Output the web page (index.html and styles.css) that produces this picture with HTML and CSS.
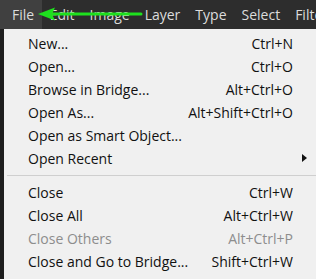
FILE: index.html
```html
<!DOCTYPE html>
<html lang="en">
<head>
    <meta charset="UTF-8">
    <title>File menu</title>
    <link rel="stylesheet" href="styles.css">
</head>
<body>
    <nav class="menubar">
        <span class="top-item active">File</span>
        <span class="top-item">Edit</span>
        <span class="top-item">Image</span>
        <span class="top-item">Layer</span>
        <span class="top-item">Type</span>
        <span class="top-item">Select</span>
        <span class="top-item">Filter</span>
        <!-- green pointer arrow drawn over the bar -->
        <svg class="pointer" width="110" height="14" viewBox="0 0 110 14">
            <path d="M14 7 H104" stroke="#1ee01e" stroke-width="3" stroke-linecap="round"/>
            <path d="M1 7 L18 0.5 L15 7 L18 13.5 Z" fill="#1ee01e"/>
        </svg>
    </nav>

    <div class="workspace">
        <div class="canvas-edge"></div>
        <ul class="menu">
            <li class="item"><span>New...</span><span class="key">Ctrl+N</span></li>
            <li class="item"><span>Open...</span><span class="key">Ctrl+O</span></li>
            <li class="item"><span>Browse in Bridge...</span><span class="key">Alt+Ctrl+O</span></li>
            <li class="item"><span>Open As...</span><span class="key">Alt+Shift+Ctrl+O</span></li>
            <li class="item"><span>Open as Smart Object...</span></li>
            <li class="item"><span>Open Recent</span><span class="submenu"></span></li>
            <li class="sep"></li>
            <li class="item"><span>Close</span><span class="key">Ctrl+W</span></li>
            <li class="item"><span>Close All</span><span class="key">Alt+Ctrl+W</span></li>
            <li class="item disabled"><span>Close Others</span><span class="key">Alt+Ctrl+P</span></li>
            <li class="item"><span>Close and Go to Bridge...</span><span class="key">Shift+Ctrl+W</span></li>
        </ul>
    </div>
</body>
</html>
```

FILE: styles.css
```css
body {
    margin: 0;
    padding: 0;
    background-color: #262626;
    font-family: "Open Sans", "Noto Sans", Arial, sans-serif;
    font-size: 14px;
    overflow: hidden;
}
.menubar {
    display: flex;
    height: 29px;
    background-color: #2d2d2d;
    position: relative;
    white-space: nowrap;
    overflow: hidden;
}
.top-item {
    color: #dcdcdc;
    line-height: 29px;
    padding: 0 7.5px;
}
.top-item:first-child {
    padding: 0 8px 0 12px;
}
.top-item.active {
    background-color: #404040;
}
.pointer {
    position: absolute;
    left: 37px;
    top: 7px;
}
.workspace {
    display: flex;
    height: 250px;
}
.canvas-edge {
    width: 4px;
    background-color: #1e1e1e;
}
.menu {
    flex: 1;
    margin: 0;
    padding: 3px 0 0 0;
    list-style: none;
    background-color: #f0f0f0;
    color: #111;
}
.item {
    display: flex;
    justify-content: space-between;
    align-items: center;
    height: 23px;
    padding: 0 23px 0 24px;
    position: relative;
}
.item.disabled {
    color: #8d8d8d;
}
.sep {
    height: 1px;
    margin: 5px 0 5px 3px;
    background-color: #cfcfcf;
}
.submenu {
    position: absolute;
    right: 9px;
    top: 7px;
    border-left: 5px solid #111;
    border-top: 4.5px solid transparent;
    border-bottom: 4.5px solid transparent;
}
```
